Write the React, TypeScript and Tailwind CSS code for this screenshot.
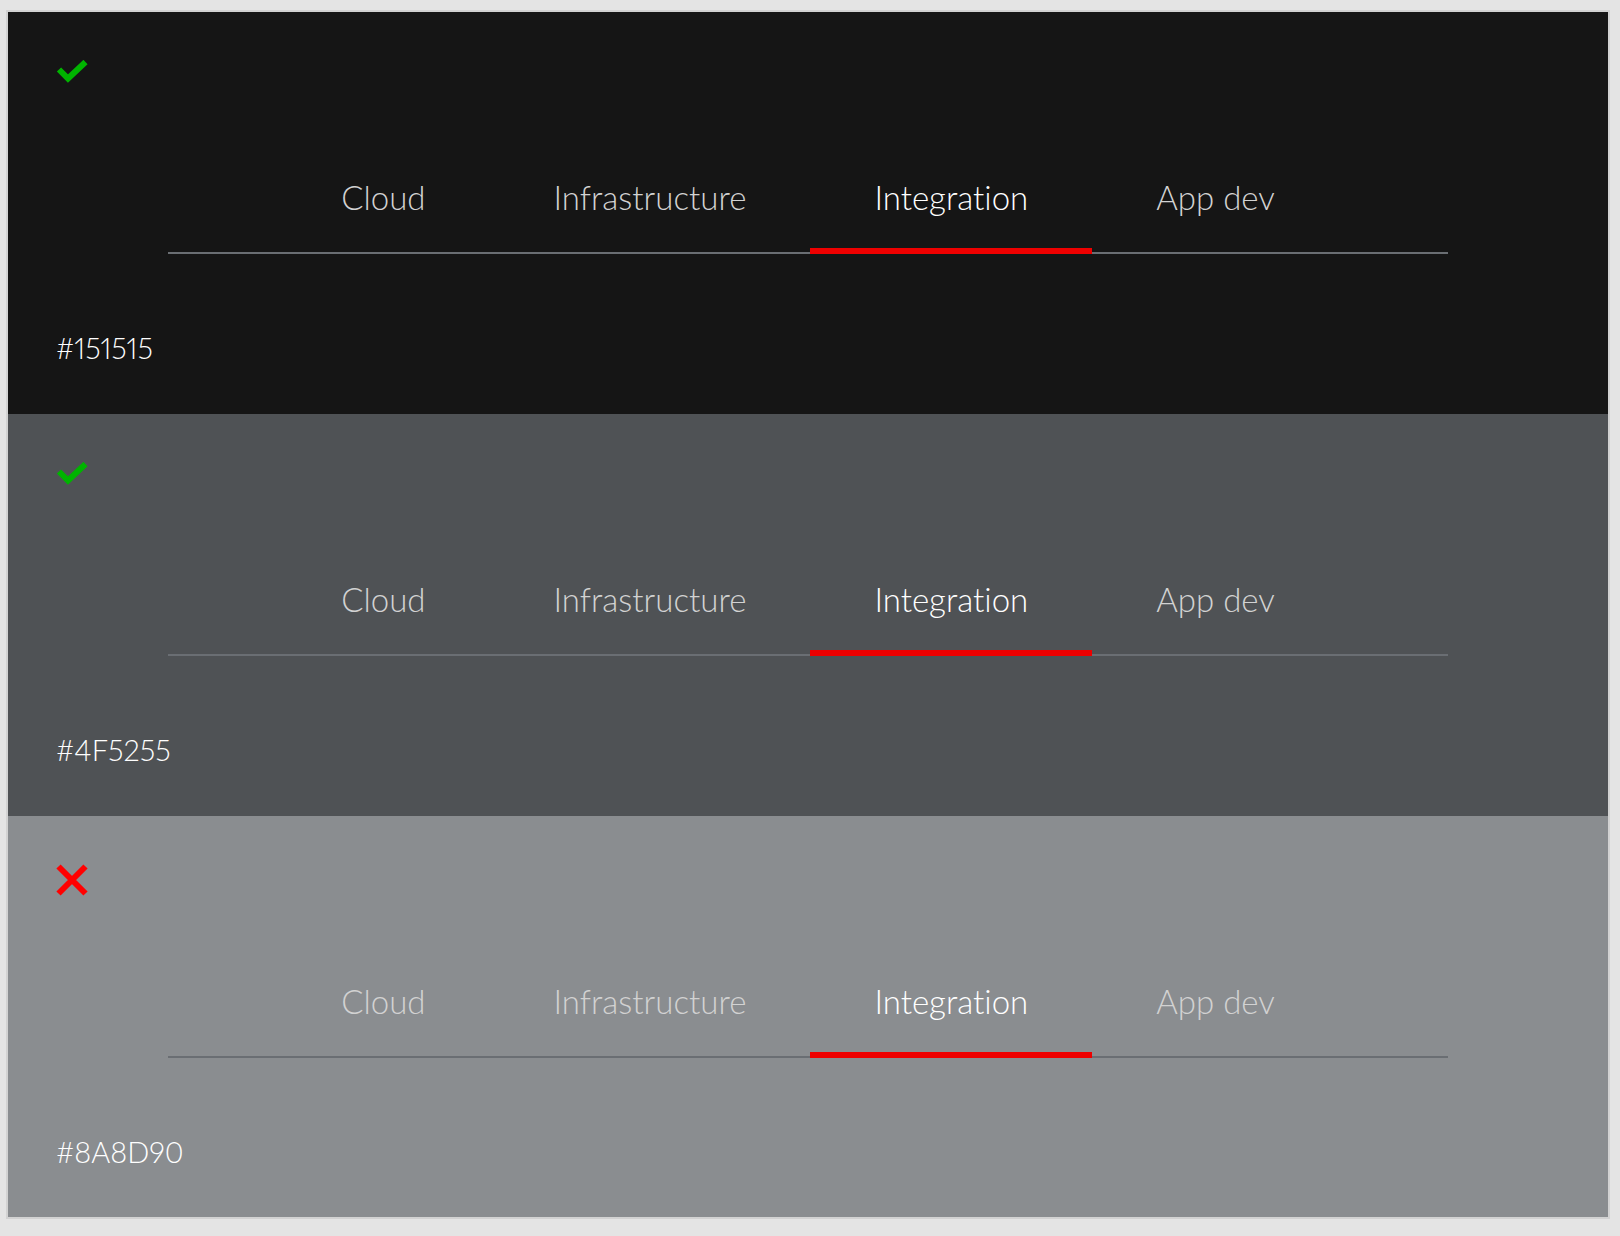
const tabs = ["Cloud", "Infrastructure", "Integration", "App dev"]

type Swatch = {
    bg: string
    hex: string
    ok: boolean
}

const swatches: Swatch[] = [
    { bg: "bg-[#151515]", hex: "#151515", ok: true },
    { bg: "bg-[#4f5255]", hex: "#4F5255", ok: true },
    { bg: "bg-[#8a8d90]", hex: "#8A8D90", ok: false },
]

function CheckIcon() {
    return (
        <svg width="32" height="24" viewBox="0 0 32 24" fill="none">
            <polyline
                points="3,9.5 12,18.5 29.5,2"
                stroke="#00b400"
                strokeWidth="6"
                strokeLinecap="butt"
                strokeLinejoin="miter"
            />
        </svg>
    )
}

function CrossIcon() {
    return (
        <svg width="32" height="32" viewBox="0 0 32 32" fill="none">
            <path d="M2.5 2.5 L29.5 29.5 M29.5 2.5 L2.5 29.5" stroke="#ff0000" strokeWidth="6" />
        </svg>
    )
}

function TabBar() {
    return (
        <div className="mx-[160px] flex justify-center border-b-2 border-[#6a6e73]">
            {tabs.map((tab) => {
                const active = tab === "Integration"
                return (
                    <button
                        key={tab}
                        type="button"
                        className={
                            active
                                ? "-mb-[2px] border-b-[6px] border-[#ee0000] px-16 pb-[32px] pt-[2px] text-[33px] font-light leading-[38px] text-white [font-variant-ligatures:none]"
                                : "-mb-[2px] border-b-[6px] border-transparent px-16 pb-[32px] pt-[2px] text-[33px] font-light leading-[38px] text-[#d2d2d2] [font-variant-ligatures:none]"
                        }
                    >
                        {tab}
                    </button>
                )
            })}
        </div>
    )
}

export default function App() {
    return (
        <main
            className="min-h-[1236px] bg-[#e4e4e4] pl-[6px] pt-[10px]"
            style={{ fontFamily: "Lato, 'Open Sans', sans-serif" }}
        >
            <div className="w-[1604px] border-2 border-[#d2d2d2]">
                {swatches.map((s, i) => (
                    <section
                        key={s.hex}
                        className={`${s.bg} flex flex-col pt-12 ${i === 2 ? "pb-[48px]" : "pb-[49px]"}`}
                    >
                        <div className="flex h-8 items-start px-12">
                            {s.ok ? <CheckIcon /> : <CrossIcon />}
                        </div>

                        <div className="mt-[84px]">
                            <TabBar />
                        </div>

                        <p className="mt-[77px] px-12 text-[29px] font-light leading-[34px] text-white proportional-nums">
                            {s.hex}
                        </p>
                    </section>
                ))}
            </div>
        </main>
    )
}
